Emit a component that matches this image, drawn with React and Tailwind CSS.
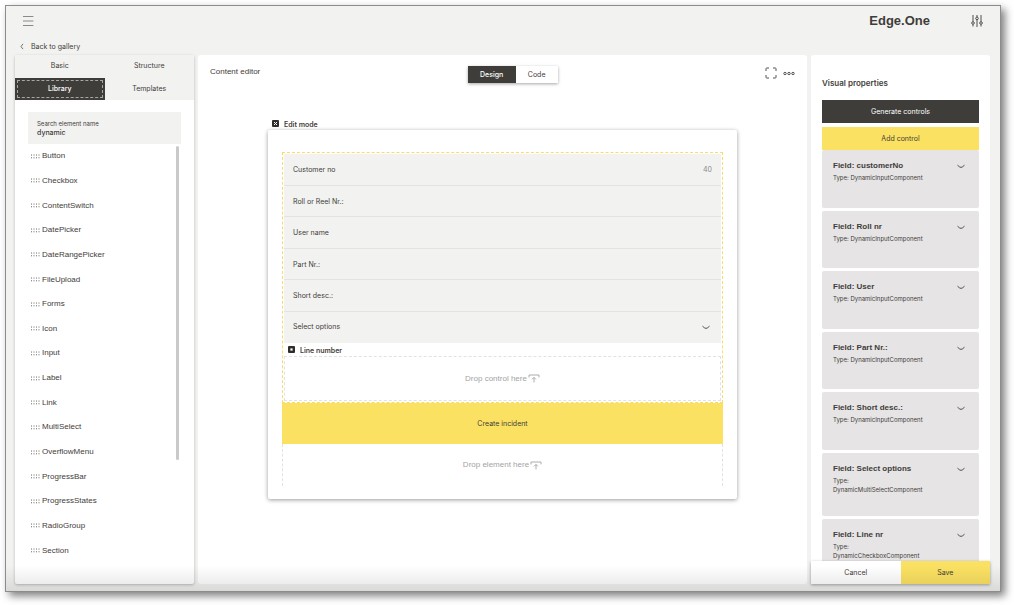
import { useState } from 'react';
import clsx from 'clsx';

const tabs = ['Basic', 'Structure', 'Library', 'Templates'];

const elements = [
    'Button',
    'Checkbox',
    'ContentSwitch',
    'DatePicker',
    'DateRangePicker',
    'FileUpload',
    'Forms',
    'Icon',
    'Input',
    'Label',
    'Link',
    'MultiSelect',
    'OverflowMenu',
    'ProgressBar',
    'ProgressStates',
    'RadioGroup',
    'Section',
];

const formFields = [
    { id: 'customerNo', label: 'Customer no', value: '40' },
    { id: 'rollNr', label: 'Roll or Reel Nr.:', value: '' },
    { id: 'user', label: 'User name', value: '' },
    { id: 'partNr', label: 'Part Nr.:', value: '' },
    { id: 'shortDesc', label: 'Short desc.:', value: '' },
];

const inputControls = ['customerNo', 'Roll nr', 'User', 'Part Nr.:', 'Short desc.:'];

const otherControls = [
    { name: 'Select options', type: 'DynamicMultiSelectComponent' },
    { name: 'Line nr', type: 'DynamicCheckboxComponent' },
];

const MenuIcon = () => (
    <svg width="12" height="12" viewBox="0 0 12 12" stroke="#8b8a87" fill="none">
        <path d="M1 1.5h10.4M1 6h10.4M1 10.5h10.4" />
    </svg>
);

const SlidersIcon = () => (
    <svg width="12" height="12" viewBox="0 0 12 12" stroke="#3f3d3a" strokeWidth="0.9" fill="none">
        <path d="M2 0v6.6M2 9.4V11.5M6 0v2M6 4.8V12M10 0v6.6M10 9.4V11.5" />
        <circle cx="2" cy="8" r="1.3" />
        <circle cx="6" cy="3.4" r="1.3" />
        <circle cx="10" cy="8" r="1.3" />
    </svg>
);

const BackIcon = () => (
    <svg width="4" height="7" viewBox="0 0 4 7" stroke="#3f3d3a" strokeWidth="0.7" fill="none">
        <path d="M3 0.9L1 3.5l2 2.6" />
    </svg>
);

const GripIcon = () => (
    <svg width="9" height="5" viewBox="0 0 9 5" fill="#7a7875">
        {[0, 2.5, 5, 7.5].map((x) => (
            <g key={x}>
                <rect x={x} y="0.5" width="1" height="1.1" />
                <rect x={x} y="3.2" width="1" height="1.1" />
            </g>
        ))}
    </svg>
);

const ChevronIcon = () => (
    <svg width="8" height="5" viewBox="0 0 8 5" stroke="#3f3d3a" strokeWidth="0.9" fill="none">
        <path d="M0.5 1.2L2.6 2.9Q4 3.9 5.4 2.9L7.5 1.2" />
    </svg>
);

const ExpandIcon = () => (
    <svg width="12" height="12" viewBox="0 0 12 12" stroke="#55534f" fill="none">
        <path d="M1 4V1.6q0-.6.6-.6H4M8 1h2.4q.6 0 .6.6V4M11 8v2.4q0 .6-.6.6H8M4 11H1.6q-.6 0-.6-.6V8" />
    </svg>
);

const DotsIcon = () => (
    <svg width="12" height="5" viewBox="0 0 12 5" stroke="#3f3d3a" strokeWidth="0.9" fill="none">
        <circle cx="2" cy="2.5" r="1.2" />
        <circle cx="6" cy="2.5" r="1.2" />
        <circle cx="10" cy="2.5" r="1.2" />
    </svg>
);

const DropIcon = () => (
    <svg width="12" height="9" viewBox="0 0 12 9" stroke="#a3a3a3" strokeWidth="0.9" fill="none">
        <path d="M1 3.4V1h10v2.4M6 8.4V3.6M4.1 5.3L6 3.4l1.9 1.9" />
    </svg>
);

const Check = ({ id, label, mark }) => (
    <div className="flex items-start gap-[5px]">
        <span className="relative flex size-[7px]">
            <input
                id={id}
                type="checkbox"
                defaultChecked
                className="size-[7px] appearance-none rounded-[1px] bg-[#2f2d2b]"
            />
            <svg
                className="pointer-events-none absolute inset-0"
                width="7"
                height="7"
                viewBox="0 0 7 7"
                stroke="#fff"
                fill="#fff"
            >
                {mark === 'cross' ? (
                    <path d="M2 2l3 3M5 2L2 5" strokeWidth="1" />
                ) : (
                    <rect x="2.4" y="2.4" width="2.2" height="2.2" stroke="none" />
                )}
            </svg>
        </span>
        <label htmlFor={id} className="text-[7px] leading-[10px] font-semibold">
            {label}
        </label>
    </div>
);

const ControlCard = ({ name, type, wrap }) => (
    <div className="flex min-h-0 flex-1 items-start justify-between rounded-[2px] bg-[#e6e4e5] pt-[10px] pr-[14px] pl-[11px]">
        <div>
            <h3 className="font-['Liberation_Sans',sans-serif] text-[8px] leading-[12px] font-bold">
                Field: {name}
            </h3>
            <p className="pt-[1px] text-[6px] leading-[9px]">
                Type: {wrap && <br />}
                {type}
            </p>
        </div>
        <button aria-label={`Expand ${name}`} className="pt-[4px]">
            <ChevronIcon />
        </button>
    </div>
);

const Library = () => {
    const [active, setActive] = useState('Library');

    return (
        <aside className="flex w-[179px] shrink-0 flex-col rounded-[2px] bg-white shadow-[0_1px_3px_rgba(0,0,0,0.25)]">
            <div className="grid h-[45px] shrink-0 grid-cols-2 grid-rows-2 bg-[#f2f2f0]">
                {tabs.map((tab) => (
                    <button
                        key={tab}
                        onClick={() => setActive(tab)}
                        className={clsx(
                            'text-[7px] leading-[10px]',
                            active === tab &&
                                'bg-[#3f3d3a] font-medium text-white outline outline-dashed outline-[#a8a6a2] -outline-offset-3'
                        )}
                    >
                        {tab}
                    </button>
                ))}
            </div>

            {/* Search */}
            <div className="mx-[13px] mt-[12px] flex h-[32px] shrink-0 flex-col justify-center bg-[#f2f2f0] px-[9px]">
                <label htmlFor="search" className="text-[6px] leading-[9px]">
                    Search element name
                </label>
                <input
                    id="search"
                    defaultValue="dynamic"
                    className="h-[10px] w-full bg-transparent text-[7px] leading-[10px] font-medium outline-none"
                />
            </div>

            {/* Element list */}
            <div className="mb-[21px] flex min-h-0 flex-1 pr-[15px] pl-[16px]">
                <ul className="flex flex-1 flex-col font-['Liberation_Sans',sans-serif]">
                    {elements.map((name) => (
                        <li key={name} className="flex flex-1 items-center gap-[2px] text-[8px] leading-[12px]">
                            <GripIcon />
                            {name}
                        </li>
                    ))}
                </ul>
                <div className="mt-[2px] h-3/4 w-[3px] rounded-full bg-[#c9c9c9]" />
            </div>
        </aside>
    );
};

const Editor = () => (
    <main className="min-w-0 flex-1 rounded-[3px] bg-white">
        <div className="flex items-start justify-between pt-[11px] pr-[12px] pl-[12px]">
            <h2 className="font-['Liberation_Sans',sans-serif] text-[8px] leading-[12px]">Content editor</h2>
            <div className="flex shadow-[0_1px_3px_rgba(0,0,0,0.35)]">
                <button className="h-[17px] w-[48px] bg-[#3f3d3a] text-[7px] leading-[10px] font-medium text-white">
                    Design
                </button>
                <button className="h-[17px] w-[42px] bg-white text-[7px] leading-[10px]">Code</button>
            </div>
            <div className="flex items-center gap-[6px] pt-[1px]">
                <button aria-label="Full screen">
                    <ExpandIcon />
                </button>
                <button aria-label="More">
                    <DotsIcon />
                </button>
            </div>
        </div>

        <div className="px-[70px] pt-[37px]">
            <div className="pl-[4px]">
                <Check id="editMode" label="Edit mode" mark="cross" />
            </div>

            <form className="rounded-[2px] bg-white px-[14px] pt-[22px] pb-[13px] shadow-[0_1px_4px_rgba(0,0,0,0.4)]">
                <div className="border border-dashed border-[#fbdc6a] p-[1px]">
                    <div className="grid h-[189px] grid-rows-6 bg-[#f2f2f0]">
                        {formFields.map((field) => (
                            <div
                                key={field.id}
                                className="flex items-center justify-between border-b border-[#e3e3e3] px-[9px] pt-[2px]"
                            >
                                <label htmlFor={field.id} className="text-[7px] leading-[10px]">
                                    {field.label}
                                </label>
                                <input
                                    id={field.id}
                                    defaultValue={field.value}
                                    className="w-1/2 bg-transparent text-right text-[7px] leading-[10px] text-[#8b8a87] outline-none"
                                />
                            </div>
                        ))}
                        <div className="flex items-center pr-[11px] pl-[9px]">
                            <select
                                aria-label="Select options"
                                className="flex-1 appearance-none bg-transparent text-[7px] leading-[10px] outline-none"
                            >
                                <option>Select options</option>
                            </select>
                            <ChevronIcon />
                        </div>
                    </div>

                    <div className="pt-[3px] pl-[4px]">
                        <Check id="lineNumber" label="Line number" mark="dot" />
                    </div>
                    <div className="flex h-[45px] items-center justify-center gap-[1px] border border-dashed border-[#e2e2e2] font-['Liberation_Sans',sans-serif] text-[8px] leading-[12px] text-[#a3a3a3]">
                        Drop control here
                        <DropIcon />
                    </div>
                </div>
                <button type="button" className="h-[41px] w-full bg-[#fbe162] text-[7px] leading-[10px]">
                    Create incident
                </button>
                <div className="flex h-[42px] items-center justify-center gap-[1px] border-x border-dashed border-[#e2e2e2] font-['Liberation_Sans',sans-serif] text-[8px] leading-[12px] text-[#a3a3a3]">
                    Drop element here
                    <DropIcon />
                </div>
            </form>
        </div>
    </main>
);

const Properties = () => (
    <aside className="flex w-[179px] shrink-0 flex-col rounded-[3px] bg-white">
        <div className="flex min-h-0 flex-1 flex-col overflow-hidden px-[11px] pt-[22px]">
            <h2 className="text-[8px] leading-[12px] font-semibold">Visual properties</h2>
            <button className="mt-[11px] h-[23px] shrink-0 bg-[#3f3d3a] text-[7px] leading-[10px] text-white">
                Generate controls
            </button>
            <button className="mt-[4px] h-[23px] shrink-0 bg-[#fbe162] text-[7px] leading-[10px]">
                Add control
            </button>
            <div className="flex h-[300px] shrink-0 flex-col gap-[3px]">
                {inputControls.map((name) => (
                    <ControlCard key={name} name={name} type="DynamicInputComponent" />
                ))}
            </div>
            {otherControls.map((control) => (
                <div key={control.name} className="mt-[3px] flex h-[63px] shrink-0 flex-col">
                    <ControlCard name={control.name} type={control.type} wrap />
                </div>
            ))}
        </div>
        <div className="grid grid-cols-2 shadow-[0_1px_3px_rgba(0,0,0,0.35)]">
            <button className="h-[23px] bg-white text-[7px] leading-[10px]">Cancel</button>
            <button className="h-[23px] bg-[#fbe162] text-[7px] leading-[10px]">Save</button>
        </div>
    </aside>
);

const App = () => (
    <div className="h-screen bg-white pt-[5px] pr-[13px] pb-[13px] pl-[5px] font-['Inter',sans-serif] text-[#3f3d3a]">
        <div className="relative flex h-full flex-col border border-[#8c8c8c] bg-[#f2f2f0] shadow-[4px_4px_8px_rgba(0,0,0,0.5)]">
            <header className="flex h-[30px] shrink-0 items-center pr-[17px] pl-[16px]">
                <button aria-label="Menu">
                    <MenuIcon />
                </button>
                <span className="ml-auto font-['Liberation_Sans',sans-serif] text-[13px] leading-[16px] font-bold">
                    Edge.One
                </span>
                <button aria-label="Settings" className="ml-[41px]">
                    <SlidersIcon />
                </button>
            </header>
            <div className="flex h-[19px] shrink-0 items-center pt-[2px] pl-[14px]">
                <a href="#" className="flex items-center gap-[7px] text-[7px] leading-[10px]">
                    <BackIcon />
                    Back to gallery
                </a>
            </div>
            <div className="flex min-h-0 flex-1 gap-[4px] pr-[10px] pb-[7px] pl-[9px]">
                <Library />
                <Editor />
                <Properties />
            </div>
            {/* Fade at the bottom edge */}
            <div className="pointer-events-none absolute inset-x-0 bottom-0 h-[26px] bg-linear-to-b from-transparent to-black/10" />
        </div>
    </div>
);

export default App;
